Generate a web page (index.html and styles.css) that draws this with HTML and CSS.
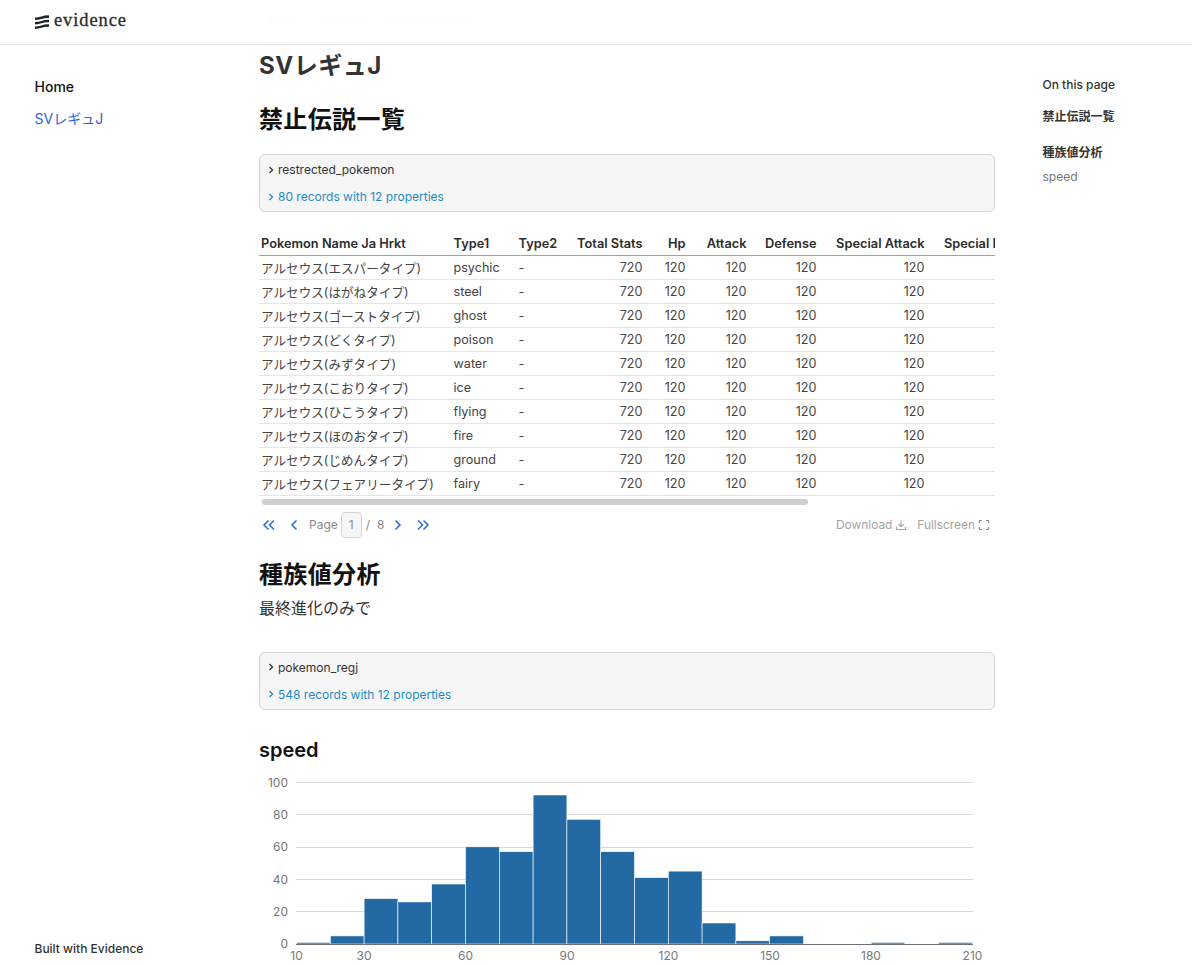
FILE: index.html
```html
<!DOCTYPE html>
<html lang="ja">
<head>
<meta charset="utf-8">
<title>SVレギュJ</title>
<link rel="stylesheet" href="styles.css">
</head>
<body>
<header class="topbar">
  <a class="logo">
    <svg class="logo-mark" viewBox="0 0 14 14" width="14" height="14"><path d="M0 2.600C4 2.800 9 0 14 .4V3C9 2.600 5 5 0 5.100zM0 7C4 7.200 9 4.400 14 4.800V7.400C9 7 5 9.400 0 9.500zM0 11.400C4 11.600 9 8.800 14 9.200V11.800C9 11.400 5 13.800 0 13.900z" fill="#1f2328"/></svg>
    <span class="logo-text">evidence</span>
  </a>
  <div class="ghosts"><i class="ghost g1"></i><i class="ghost g2"></i><i class="ghost g3"></i></div>
</header>
<div class="layout">
  <aside class="sidebar">
    <nav class="side-nav">
      <a class="nav-home">Home</a>
      <a class="nav-link">SVレギュJ</a>
    </nav>
    <div class="side-foot">Built with Evidence</div>
  </aside>
  <main class="content">
    <h1 class="page-title">SVレギュJ</h1>
    <h2 class="section-title first">禁止伝説一覧</h2>
    <div class="query-box">
      <div class="query-name"><svg class="chev" viewBox="0 0 6 8" width="6" height="8"><path d="M1.500 1 4.500 4 1.500 7" fill="none" stroke="currentColor" stroke-width="1.300"/></svg>restrected_pokemon</div>
      <div class="query-meta"><svg class="chev" viewBox="0 0 6 8" width="6" height="8"><path d="M1.500 1 4.500 4 1.500 7" fill="none" stroke="currentColor" stroke-width="1.300"/></svg>80 records with 12 properties</div>
    </div>
    <div class="table-wrap">
      <table class="data">
        <colgroup><col class="c-name"><col class="c-t1"><col class="c-t2"><col class="c-total"><col class="c-hp"><col class="c-atk"><col class="c-def"><col class="c-spa"><col class="c-spd"></colgroup>
        <thead><tr><th>Pokemon Name Ja Hrkt</th><th>Type1</th><th>Type2</th><th class="num">Total Stats</th><th class="num">Hp</th><th class="num">Attack</th><th class="num">Defense</th><th class="num">Special Attack</th><th class="num">Special Defense</th></tr></thead>
        <tbody>
          <tr><td>アルセウス(エスパータイプ)</td><td>psychic</td><td>-</td><td class="num">720</td><td class="num">120</td><td class="num">120</td><td class="num">120</td><td class="num">120</td><td class="num">120</td></tr>
          <tr><td>アルセウス(はがねタイプ)</td><td>steel</td><td>-</td><td class="num">720</td><td class="num">120</td><td class="num">120</td><td class="num">120</td><td class="num">120</td><td class="num">120</td></tr>
          <tr><td>アルセウス(ゴーストタイプ)</td><td>ghost</td><td>-</td><td class="num">720</td><td class="num">120</td><td class="num">120</td><td class="num">120</td><td class="num">120</td><td class="num">120</td></tr>
          <tr><td>アルセウス(どくタイプ)</td><td>poison</td><td>-</td><td class="num">720</td><td class="num">120</td><td class="num">120</td><td class="num">120</td><td class="num">120</td><td class="num">120</td></tr>
          <tr><td>アルセウス(みずタイプ)</td><td>water</td><td>-</td><td class="num">720</td><td class="num">120</td><td class="num">120</td><td class="num">120</td><td class="num">120</td><td class="num">120</td></tr>
          <tr><td>アルセウス(こおりタイプ)</td><td>ice</td><td>-</td><td class="num">720</td><td class="num">120</td><td class="num">120</td><td class="num">120</td><td class="num">120</td><td class="num">120</td></tr>
          <tr><td>アルセウス(ひこうタイプ)</td><td>flying</td><td>-</td><td class="num">720</td><td class="num">120</td><td class="num">120</td><td class="num">120</td><td class="num">120</td><td class="num">120</td></tr>
          <tr><td>アルセウス(ほのおタイプ)</td><td>fire</td><td>-</td><td class="num">720</td><td class="num">120</td><td class="num">120</td><td class="num">120</td><td class="num">120</td><td class="num">120</td></tr>
          <tr><td>アルセウス(じめんタイプ)</td><td>ground</td><td>-</td><td class="num">720</td><td class="num">120</td><td class="num">120</td><td class="num">120</td><td class="num">120</td><td class="num">120</td></tr>
          <tr><td>アルセウス(フェアリータイプ)</td><td>fairy</td><td>-</td><td class="num">720</td><td class="num">120</td><td class="num">120</td><td class="num">120</td><td class="num">120</td><td class="num">120</td></tr>
        </tbody>
      </table>
    </div>
    <div class="scrollbar"><div class="thumb"></div></div>
    <div class="pager">
      <svg class="pg first-ic" viewBox="0 0 14 12" width="14" height="12"><path d="M6.500 1.500 2 6l4.500 4.500M12 1.500 7.500 6l4.500 4.500" fill="none" stroke="#2f6fd6" stroke-width="1.600"/></svg>
      <svg class="pg prev-ic" viewBox="0 0 8 12" width="8" height="12"><path d="M6.500 1.500 2 6l4.500 4.500" fill="none" stroke="#2f6fd6" stroke-width="1.600"/></svg>
      <span class="pg-label">Page</span>
      <span class="pg-input">1</span>
      <span class="pg-slash">/</span>
      <span class="pg-total">8</span>
      <svg class="pg next-ic" viewBox="0 0 8 12" width="8" height="12"><path d="M1.500 1.500 6 6l-4.500 4.500" fill="none" stroke="#2f6fd6" stroke-width="1.600"/></svg>
      <svg class="pg last-ic" viewBox="0 0 14 12" width="14" height="12"><path d="M2 1.500 6.500 6 2 10.500M7.500 1.500 12 6l-4.500 4.500" fill="none" stroke="#2f6fd6" stroke-width="1.600"/></svg>
      <span class="pg-actions">
        <span class="pg-act">Download <svg viewBox="0 0 12 12" width="12" height="12"><path d="M6 1.500v6M3.500 5.200 6 7.700l2.500-2.500M1.500 8v2.500h9V8" fill="none" stroke="#a3a3a3" stroke-width="1.100"/></svg></span>
        <span class="pg-act">Fullscreen <svg viewBox="0 0 12 12" width="12" height="12"><path d="M1.500 4V1.500H4M8 1.500h2.500V4M10.500 8v2.500H8M4 10.500H1.500V8" fill="none" stroke="#8a8a8a" stroke-width="1.200"/></svg></span>
      </span>
    </div>
    <h2 class="section-title second">種族値分析</h2>
    <p class="lead">最終進化のみで</p>
    <div class="query-box">
      <div class="query-name"><svg class="chev" viewBox="0 0 6 8" width="6" height="8"><path d="M1.500 1 4.500 4 1.500 7" fill="none" stroke="currentColor" stroke-width="1.300"/></svg>pokemon_regj</div>
      <div class="query-meta"><svg class="chev" viewBox="0 0 6 8" width="6" height="8"><path d="M1.500 1 4.500 4 1.500 7" fill="none" stroke="currentColor" stroke-width="1.300"/></svg>548 records with 12 properties</div>
    </div>
    <h3 class="sub-title">speed</h3>
    <svg class="chart" viewBox="0 0 736 190" width="736" height="190">
      <g stroke="#d9d9d9" stroke-width="1">
        <path d="M37 9.500H714M37 41.500H714M37 74.500H714M37 106.500H714M37 138.500H714"/>
      </g>
      <g fill="#236aa4" stroke="#fff" stroke-width=".6">
        <rect x="37.500" y="169.400" width="33.800" height="1.600"/>
        <rect x="71.300" y="162.900" width="33.800" height="8.100"/>
        <rect x="105.100" y="125.600" width="33.800" height="45.400"/>
        <rect x="138.900" y="128.900" width="33.800" height="42.100"/>
        <rect x="172.700" y="111" width="33.800" height="60"/>
        <rect x="206.500" y="73.800" width="33.800" height="97.200"/>
        <rect x="240.300" y="78.700" width="33.800" height="92.300"/>
        <rect x="274.100" y="22" width="33.800" height="149"/>
        <rect x="307.900" y="46.300" width="33.800" height="124.700"/>
        <rect x="341.700" y="78.700" width="33.800" height="92.300"/>
        <rect x="375.500" y="104.600" width="33.800" height="66.400"/>
        <rect x="409.300" y="98.100" width="33.800" height="72.900"/>
        <rect x="443.100" y="150" width="33.800" height="21"/>
        <rect x="476.900" y="167.800" width="33.800" height="3.200"/>
        <rect x="510.700" y="162.900" width="33.800" height="8.100"/>
        <rect x="612.100" y="169.400" width="33.800" height="1.600"/>
        <rect x="679.700" y="169.400" width="33.800" height="1.600"/>
      </g>
      <path d="M37 171.500H714" stroke="#6e7079" stroke-width="1"/>
      <g class="axis y-axis" text-anchor="end">
        <text x="29" y="14">100</text><text x="29" y="46">80</text><text x="29" y="78">60</text><text x="29" y="111">40</text><text x="29" y="143">20</text><text x="29" y="175">0</text>
      </g>
      <g class="axis x-axis" text-anchor="middle">
        <text x="37.500" y="187">10</text><text x="105" y="187">30</text><text x="206.500" y="187">60</text><text x="308" y="187">90</text><text x="409.500" y="187">120</text><text x="511" y="187">150</text><text x="612" y="187">180</text><text x="713.500" y="187">210</text>
      </g>
    </svg>
  </main>
  <aside class="toc">
    <div class="toc-head">On this page</div>
    <a class="toc-h2">禁止伝説一覧</a>
    <a class="toc-h2 second-h2">種族値分析</a>
    <a class="toc-h3">speed</a>
  </aside>
</div>
</body>
</html>
```
FILE: styles.css
```css
* { box-sizing: border-box; }
html, body { margin: 0; height: 965px; overflow: hidden; background: #fff; }
body { font-family: Inter, "Noto Sans CJK JP", sans-serif; color: #2c2c2c; }

.topbar { height: 45px; border-bottom: 1px solid #e5e5e5; padding: 0 0 0 35px; display: flex; align-items: center; }
.logo { display: flex; align-items: center; gap: 5px; margin-top: -4px; }
.logo-mark { display: block; margin-top: 4px; }
.logo-text { font-family: "Liberation Serif", serif; font-size: 18.500px; letter-spacing: .9px; color: #2b2b2b; -webkit-text-stroke: .3px #2b2b2b; }
.ghosts { display: flex; margin-left: 141px; margin-top: -4px; }
.ghost { display: block; height: 10px; background: #fdfdfd; filter: blur(2px); }
.g1 { width: 26px; }
.g2 { width: 50px; margin-left: 26px; }
.g3 { width: 85px; margin-left: 15px; }

.layout { display: grid; grid-template-columns: 259px 736px 197px; height: 920px; }

.sidebar { padding: 33px 0 9px 34.500px; display: flex; flex-direction: column; justify-content: space-between; }
.side-nav { display: flex; flex-direction: column; gap: 15px; }
.nav-home { font-size: 14px; font-weight: 500; line-height: 17px; color: #111; }
.nav-link { font-size: 14px; line-height: 18px; color: #2f62d9; }
.side-foot { font-size: 12px; font-weight: 500; line-height: 15px; color: #333; }

.content { min-width: 0; overflow: hidden; }
.page-title { margin: 6px 0 0; font-size: 24px; font-weight: 700; line-height: 30px; letter-spacing: .5px; color: #333; }
.section-title { margin: 0; font-size: 24px; font-weight: 600; line-height: 30px; letter-spacing: .35px; color: #111; }
.section-title.first { margin-top: 24px; }
.section-title.second { margin-top: 22px; }
.lead { margin: 7px 0 0; font-size: 16px; line-height: 22px; color: #333; }

.query-box { height: 58px; margin-top: 19px; border: 1px solid #d4d4d4; border-radius: 6px; background: #f6f6f6; padding: 7px 8px; font-size: 12px; line-height: 15px; }
.lead + .query-box { margin-top: 33px; }
.query-name { display: flex; align-items: center; gap: 4px; color: #333; }
.query-meta { display: flex; align-items: center; gap: 4px; margin-top: 12px; color: #1f8bc4; }
.chev { flex: none; display: block; }

.table-wrap { margin-top: 20px; overflow: hidden; }
.data { table-layout: fixed; width: 785px; border-collapse: collapse; font-size: 12.600px; }
.c-name { width: 192.500px; } .c-t1 { width: 65px; } .c-t2 { width: 47px; } .c-total { width: 79px; } .c-hp { width: 43px; } .c-atk { width: 61px; } .c-def { width: 70px; } .c-spa { width: 108px; } .c-spd { width: 119.500px; }
.data th { height: 23px; padding: 0 2px; text-align: left; font-size: 12.800px; font-weight: 600; color: #2c2c2c; border-bottom: 1px solid #a3a3a3; white-space: nowrap; overflow: hidden; }
.data td { height: 24px; padding: 0 2px; color: #444; border-bottom: 1px solid #e5e5e5; white-space: nowrap; }
.data .num { text-align: right; padding-right: 0; }

.scrollbar { height: 6px; margin-top: 3px; padding-left: 3px; }
.thumb { width: 546px; height: 6px; border-radius: 3px; background: #cfcfcf; }

.pager { display: flex; align-items: center; height: 26px; margin-top: 7px; padding-left: 3px; font-size: 12px; color: #8a8a8a; }
.pg { display: block; flex: none; }
.prev-ic { margin-left: 14px; }
.pg-label { margin-left: 11px; }
.pg-input { width: 21px; height: 26px; margin-left: 3px; border: 1px solid #d4d4d4; border-radius: 4px; background: #f6f6f6; display: flex; align-items: center; justify-content: center; }
.pg-slash { margin-left: 4px; }
.pg-total { margin-left: 7px; }
.next-ic { margin-left: 9px; }
.last-ic { margin-left: 14px; }
.pg-actions { margin-left: auto; padding-right: 5px; display: flex; gap: 10px; color: #a3a3a3; font-size: 11.900px; }
.pg-act { display: flex; align-items: center; gap: 3px; }

.sub-title { margin: 29px 0 0; font-size: 20px; font-weight: 600; line-height: 22px; color: #111; }
.chart { display: block; margin-top: 12px; }
.axis { font-family: Inter, sans-serif; font-size: 12px; fill: #777; }

.toc { padding: 32px 0 0 47.500px; display: flex; flex-direction: column; font-size: 12px; }
.toc-head { font-weight: 500; line-height: 16px; color: #333; }
.toc-h2 { margin-top: 16px; font-weight: 600; line-height: 16px; color: #333; }
.toc-h2.second-h2 { margin-top: 20px; }
.toc-h3 { margin-top: 8px; line-height: 16px; color: #777; }
```
